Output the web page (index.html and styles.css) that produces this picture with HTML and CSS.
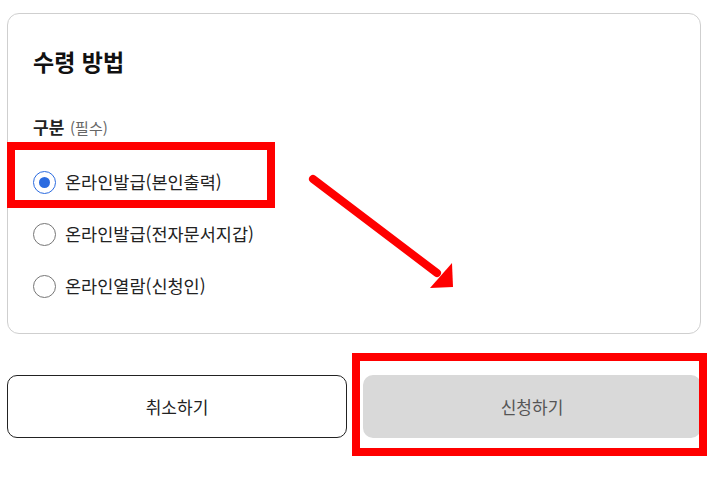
FILE: index.html
```html
<!DOCTYPE html>
<html lang="ko">
<head>
<meta charset="utf-8">
<title>수령 방법</title>
<link rel="stylesheet" href="styles.css">
</head>
<body>
<div class="page">
  <section class="card">
    <h2 class="title">수령 방법</h2>
    <div class="label">구분 <span class="req">(필수)</span></div>
    <div class="options">
      <label class="option"><span class="radio checked"></span><span class="opt-text">온라인발급(본인출력)</span></label>
      <label class="option"><span class="radio"></span><span class="opt-text">온라인발급(전자문서지갑)</span></label>
      <label class="option"><span class="radio"></span><span class="opt-text">온라인열람(신청인)</span></label>
    </div>
  </section>
  <div class="actions">
    <button class="btn btn-cancel">취소하기</button>
    <button class="btn btn-submit">신청하기</button>
  </div>
</div>
<div class="mark mark-radio"></div>
<div class="mark mark-submit"></div>
<svg class="arrow" width="709" height="487" viewBox="0 0 709 487">
  <line x1="313" y1="179" x2="437" y2="273" stroke="#ff0000" stroke-width="8" stroke-linecap="round"/>
  <polygon points="430,288 453,287 452,263" fill="#ff0000"/>
</svg>
</body>
</html>
```
FILE: styles.css
```css
* { box-sizing: border-box; }
html, body { margin: 0; padding: 0; background: #fff; }
body {
  font-family: "Noto Sans CJK KR", "Noto Sans", sans-serif;
  color: #222;
  width: 709px;
  height: 487px;
  overflow: hidden;
}
.page { padding: 13px 8px 0 7px; }
.card {
  border: 1px solid #cfcfcf;
  border-radius: 12px;
  padding: 32px 25px 21px 25px;
}
.title {
  margin: 0;
  font-size: 23px;
  line-height: 31px;
  font-weight: 700;
  color: #111;
}
.label {
  margin-top: 38px;
  font-size: 17px;
  line-height: 24px;
  font-weight: 700;
  color: #222;
}
.req {
  font-size: 15px;
  font-weight: 400;
  color: #666;
  margin-left: 1px;
}
.options { margin-top: 16px; display: flex; flex-direction: column; }
.option {
  height: 52px;
  display: flex;
  align-items: center;
  gap: 9px;
}
.radio {
  width: 23px;
  height: 23px;
  border-radius: 50%;
  border: 1.5px solid #767676;
  display: flex;
  align-items: center;
  justify-content: center;
  flex: none;
}
.radio.checked { border-color: #2b6be0; }
.radio.checked::after {
  content: "";
  width: 11px;
  height: 11px;
  border-radius: 50%;
  background: #2b6be0;
}
.opt-text { font-size: 17.5px; line-height: 24px; color: #222; }
.actions {
  margin-top: 41px;
  display: flex;
  gap: 16px;
}
.btn {
  flex: 1;
  height: 63px;
  border-radius: 10px;
  font-family: inherit;
  font-size: 17px;
}
.btn-cancel { background: #fff; border: 1px solid #222; color: #222; }
.btn-submit { background: #d9d9d9; border: none; color: #555; }
.mark {
  position: absolute;
  border: 8px solid #ff0000;
}
.mark-radio { left: 7px; top: 142px; width: 268px; height: 66px; }
.mark-submit { left: 352px; top: 353px; width: 355px; height: 103px; }
.arrow { position: absolute; left: 0; top: 0; pointer-events: none; }
```
